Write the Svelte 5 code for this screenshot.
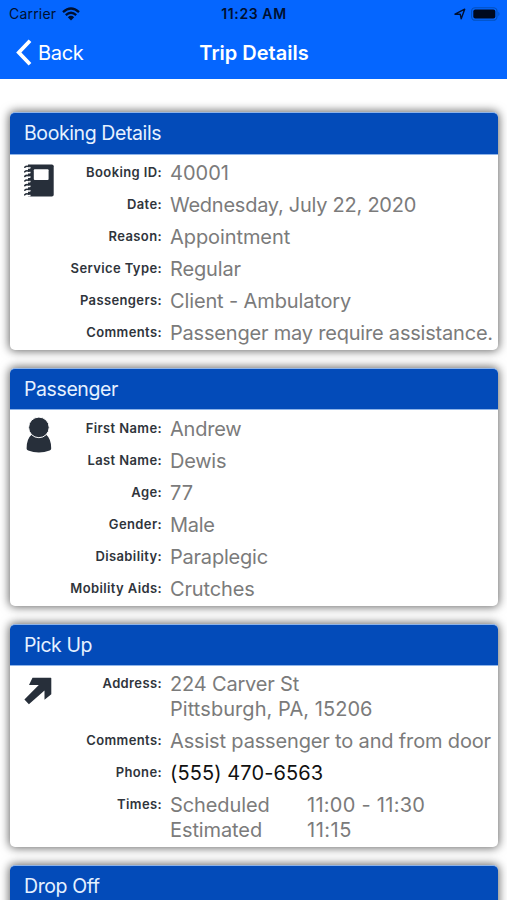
<script>
  // Each text line is [text, letter spacing in px].
  const cards = [
    {
      title: 'Booking Details',
      icon: 'book',
      rows: [
        { label: 'Booking ID:', lines: [['40001', 0]] },
        { label: 'Date:', lines: [['Wednesday, July 22, 2020', -0.25]] },
        { label: 'Reason:', lines: [['Appointment', -0.08]] },
        { label: 'Service Type:', lines: [['Regular', -0.15]] },
        { label: 'Passengers:', lines: [['Client - Ambulatory', -0.13]] },
        { label: 'Comments:', lines: [['Passenger may require assistance.', -0.2]] }
      ]
    },
    {
      title: 'Passenger',
      icon: 'person',
      rows: [
        { label: 'First Name:', lines: [['Andrew', -0.2]] },
        { label: 'Last Name:', lines: [['Dewis', -0.25]] },
        { label: 'Age:', lines: [['77', 0]] },
        { label: 'Gender:', lines: [['Male', -0.3]] },
        { label: 'Disability:', lines: [['Paraplegic', -0.22]] },
        { label: 'Mobility Aids:', lines: [['Crutches', -0.15]] }
      ]
    },
    {
      title: 'Pick Up',
      icon: 'arrow',
      rows: [
        { label: 'Address:', lines: [['224 Carver St', -0.17], ['Pittsburgh, PA, 15206', 0.06]] },
        { label: 'Comments:', lines: [['Assist passenger to and from door', -0.16]] },
        { label: 'Phone:', lines: [['(555) 470-6563', 0.1]], link: true },
        { label: 'Times:', times: [['Scheduled', '11:00 - 11:30', 0.27], ['Estimated', '11:15', 0.5]] }
      ]
    },
    { title: 'Drop Off', icon: '', rows: [] }
  ];
</script>

<div class="screen">
  <header>
    <div class="status">
      <div class="carrier">
        <span>Carrier</span>
        <svg width="18" height="14" viewBox="0 0 18 14">
          <path d="M1 5.2Q9-2.2 17 5.2M3.8 8.1Q9 3.4 14.2 8.1" fill="none" stroke="#001030" stroke-width="2.3" />
          <path d="M5.8 10.2Q9 7.4 12.2 10.2L9 13.4Z" fill="#001030" />
        </svg>
      </div>
      <div class="clock">11:23 AM</div>
      <div class="indicators">
        <svg width="12" height="12" viewBox="0 0 12 12">
          <path d="M1 6.2L10.7 1.2L7.2 10.8L6.2 6.2Z" fill="none" stroke="#001030" stroke-width="1.4" stroke-linejoin="round" />
        </svg>
        <svg width="30" height="14" viewBox="0 0 30 14">
          <rect x=".6" y=".7" width="25.4" height="12.6" rx="3.6" fill="none" stroke="#0350bd" stroke-width="1.1" />
          <rect x="2.3" y="2.4" width="22" height="9.2" rx="2" fill="#000a20" />
          <path d="M27.4 4.8Q29.6 7 27.4 9.2Z" fill="#0350bd" />
        </svg>
      </div>
    </div>
    <nav>
      <div class="back">
        <svg width="16" height="27" viewBox="0 0 16 27">
          <path d="M14 1.8L2.8 13.5L14 25.2" fill="none" stroke="#fff" stroke-width="3.8" />
        </svg>
        <span>Back</span>
      </div>
      <h1>Trip Details</h1>
      <div></div>
    </nav>
  </header>

  <main>
    {#each cards as card}
      <section>
        <h2>{card.title}</h2>
        <div class="body">
          <div class="icon">
            {#if card.icon === 'book'}
              <svg width="31" height="33" viewBox="0 0 31 33">
                <path d="M5 .5H28.9Q30.7.5 30.7 2.3V30.7Q30.7 32.5 28.9 32.5H5Z" fill="#272f3a" />
                {#each [2.6, 7.2, 11.8, 16.4, 21, 25.6, 30.2] as y}
                  <path d="M4.4 {y + 1.2}H6.6" stroke="#fff" stroke-width="2" stroke-linecap="round" />
                  <path d="M1.8 {y + 0.6}Q3.2 {y - 1} 6 {y}" fill="none" stroke="#272f3a" stroke-width="1.6" stroke-linecap="round" />
                {/each}
                <rect x="10.8" y="5.2" width="14.8" height="10.8" rx="1" fill="#fff" />
              </svg>
            {:else if card.icon === 'person'}
              <svg class="person" width="31" height="36" viewBox="0 0 31 36">
                <path d="M8.5 17.8H23.3Q28.2 22 28.2 31.4Q28.2 32.8 26.6 33.4Q21.5 35.4 15.9 35.4Q10.3 35.4 5.2 33.4Q3.6 32.8 3.6 31.4Q3.6 22 8.5 17.8Z" fill="#272f3a" />
                <circle cx="15.9" cy="10.4" r="10.3" fill="#272f3a" stroke="#fff" stroke-width="1" />
              </svg>
            {:else if card.icon === 'arrow'}
              <svg width="31" height="33" viewBox="0 0 31 33">
                <path d="M9.5 2.7H27.7Q28.3 2.7 28.3 3.3V19.2L21.5 24.7V15.5L5.9 29.3L1.4 24.5L15.8 10.1H6Z" fill="#272f3a" />
              </svg>
            {/if}
          </div>
          <dl>
            {#each card.rows as row}
              <div class="row">
                <dt>{row.label}</dt>
                <dd class:link={row.link}>
                  {#if row.times}
                    {#each row.times as [name, time, spacing]}
                      <div class="time">
                        <span>{name}</span>
                        <span style:letter-spacing="{spacing}px">{time}</span>
                      </div>
                    {/each}
                  {:else}
                    {#each row.lines as [text, spacing]}
                      <div style:letter-spacing="{spacing}px">{text}</div>
                    {/each}
                  {/if}
                </dd>
              </div>
            {/each}
          </dl>
        </div>
      </section>
    {/each}
  </main>
</div>

<style>
  .screen {
    height: 900px;
    overflow: hidden;
    background: #fff;
    font-family: Inter, 'Liberation Sans', sans-serif;
  }
  header {
    height: 79px;
    background: #0566ff;
    box-sizing: border-box;
  }
  .status {
    display: grid;
    grid-template-columns: 1fr auto 1fr;
    align-items: center;
    height: 27px;
    padding: 0 6px 0 9px;
    color: #001030;
    font-size: 14px;
  }
  .carrier, .indicators, .back {
    display: flex;
    align-items: center;
  }
  .carrier { gap: 6px; letter-spacing: 0.2px; }
  .clock { margin-right: 2px; font-weight: 600; font-size: 14px; letter-spacing: 0.6px; }
  .indicators { justify-content: flex-end; gap: 5px; }
  nav {
    display: grid;
    grid-template-columns: 1fr auto 1fr;
    align-items: center;
    height: 51px;
    padding: 0 15px 0 16px;
    color: #fff;
  }
  .back { gap: 6px; font-size: 20px; letter-spacing: -0.3px; }
  h1 { margin: 0; font-size: 20px; font-weight: 600; }
  main {
    display: flex;
    flex-direction: column;
    gap: 18px;
    padding: 33.4px 9px 0 10px;
  }
  section {
    flex: none;
    border-radius: 5px;
    background: #fff;
    box-shadow: 0 0 10px 1px rgba(0, 0, 0, 0.6);
  }
  h2 {
    box-sizing: border-box;
    height: 42.3px;
    margin: 0;
    padding-left: 14px;
    border: solid #8fb4e8;
    border-width: 1px 0;
    border-radius: 5px 5px 0 0;
    background: #034bb9;
    color: #e6f1ff;
    font-size: 19.5px;
    font-weight: 400;
    letter-spacing: -0.4px;
    line-height: 40.3px;
  }
  .body { display: flex; padding: 6.1px 0 4.3px; }
  .icon { flex: none; width: 38px; padding: 3px 0 0 13px; }
  .icon svg { display: block; }
  .icon .person { margin-top: -3px; }
  dl {
    flex: 1;
    display: flex;
    flex-direction: column;
    gap: 7.5px;
    margin: 0;
  }
  .row { display: flex; gap: 8px; }
  dt {
    width: 101px;
    flex: none;
    text-align: right;
    color: #2f343b;
    font-size: 13px;
    font-weight: 600;
    letter-spacing: 0.38px;
    line-height: 22.6px;
    white-space: nowrap;
  }
  dd {
    margin: 0;
    color: #7b7b7b;
    font-size: 20px;
    line-height: 24.6px;
    white-space: nowrap;
  }
  .link { color: #111; }
  .time { display: flex; }
  .time span:first-child { width: 137px; letter-spacing: -0.1px; }
</style>
